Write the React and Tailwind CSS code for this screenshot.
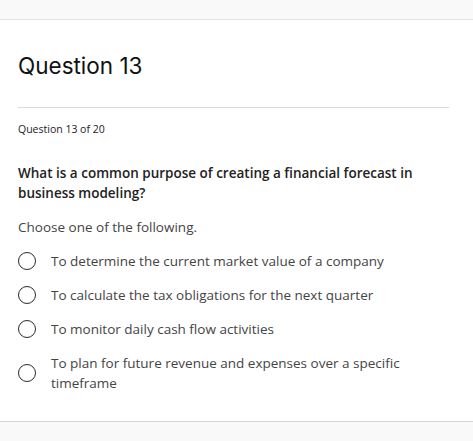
import React from 'react';

const options = [
  'To determine the current market value of a company',
  'To calculate the tax obligations for the next quarter',
  'To monitor daily cash flow activities',
  'To plan for future revenue and expenses over a specific timeframe',
];

const App = () => {
  return (
    <div className="min-h-[441px] bg-[#f9f9f9] font-['Open_Sans',sans-serif] text-[#222]">
      <div className="h-5 border-b border-[#e3e3e3] bg-[#f9f9f9]"></div>

      <div className="bg-white border-b border-[#d6d6d6] pl-[18px] pr-6 pt-8 pb-7">
        <h1 className="font-['Inter',sans-serif] text-[22.5px] leading-7 font-normal text-[#111]">
          Question 13
        </h1>

        <hr className="mt-[27px] border-t border-[#d9d9d9]" />

        <p className="mt-[13px] text-[10.5px] leading-4 text-[#222]">Question 13 of 20</p>

        <p className="mt-[26px] text-[13.5px] leading-5 font-semibold text-[#222] pr-6">
          What is a common purpose of creating a financial forecast in business modeling?
        </p>

        <p className="mt-[14px] text-[13.5px] leading-5 text-[#444]">Choose one of the following.</p>

        <ul className="mt-[14px] flex flex-col gap-[14px]">
          {options.map((opt, i) => (
            <li key={i} className="flex items-center gap-[15px]">
              <span className="w-[18px] h-[18px] shrink-0 rounded-full border-[1.5px] border-[#2b2b2b] bg-white"></span>
              <span className="text-[13.5px] leading-5 text-[#444] pr-10">{opt}</span>
            </li>
          ))}
        </ul>
      </div>
    </div>
  );
};

export default App;
